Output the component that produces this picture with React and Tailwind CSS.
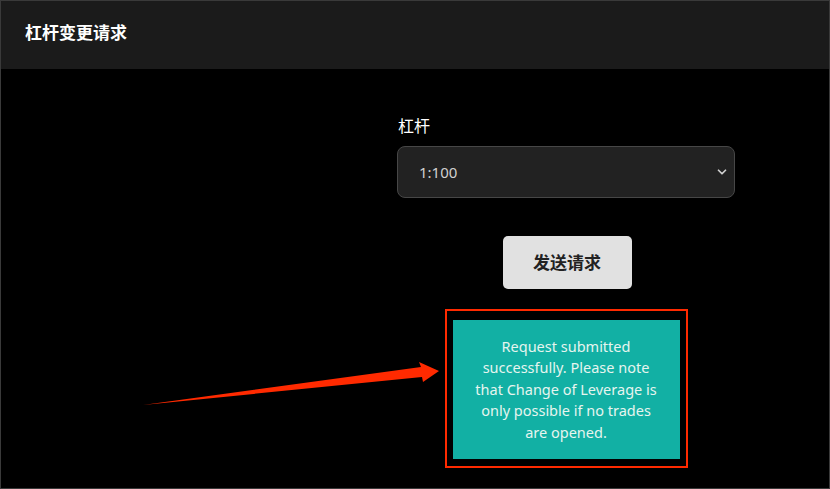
export default function App() {
  return (
    <div className="w-[830px] h-[489px] bg-black border border-[#3a3a3a] overflow-hidden font-['Noto_Sans','Noto_Sans_CJK_SC',sans-serif] relative">
      {/* Header */}
      <div className="h-[68px] bg-[#1b1b1b] flex items-center px-6">
        <h1 className="text-white text-[17px] font-bold -mt-[4px]">杠杆变更请求</h1>
      </div>

      {/* Form */}
      <div className="flex justify-end pr-[94px] pt-[46px]">
        <div className="w-[338px] flex flex-col">
          <label className="text-white text-[16px] leading-[22px] pl-[1px]">杠杆</label>
          <div className="mt-[9px] h-[52px] rounded-[8px] bg-[#222222] border border-[#474747] flex items-center justify-between pl-[21px] pr-[5px]">
            <span className="text-[#d0d0d0] text-[15px]">1:100</span>
            <svg width="14" height="14" viewBox="0 0 24 24" fill="none" stroke="#cfcfcf" strokeWidth="3" strokeLinecap="round" strokeLinejoin="round">
              <path d="M6 9l6 6 6-6" />
            </svg>
          </div>
          <div className="flex justify-center mt-[38px] pl-[2px]">
            <button className="w-[129px] h-[53px] rounded-[5px] bg-[#e1e1e1] text-[#222] text-[17px] font-bold">
              发送请求
            </button>
          </div>
          <div className="flex justify-center mt-[20px]">
            <div className="border-2 border-[#ff2a00] px-[6px] pt-[9px] pb-[7px]">
              <div className="w-[227px] h-[139px] bg-[#12b0a4] flex items-center justify-center px-[20px]">
                <p className="text-[#e6f5ef] text-[14.5px] leading-[21.5px] text-center">
                  Request submitted successfully. Please note that Change of Leverage is only possible if no trades are opened.
                </p>
              </div>
            </div>
          </div>
        </div>
      </div>

      {/* Annotation arrow */}
      <svg className="absolute left-0 top-0 pointer-events-none" width="830" height="489">
        <polygon points="142,404 420,366 418,361 438,370 422,381 421,376" fill="#ff2a00" />
      </svg>
    </div>
  );
}
